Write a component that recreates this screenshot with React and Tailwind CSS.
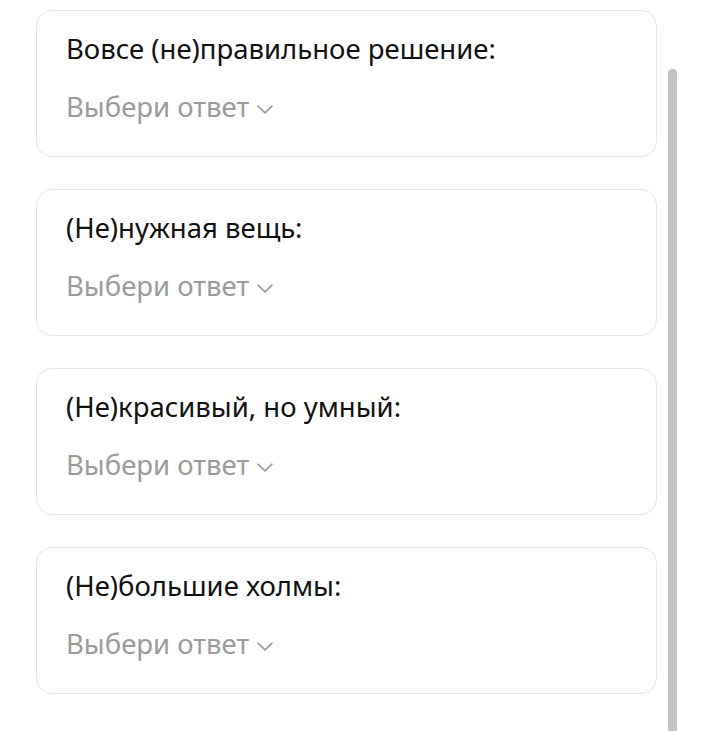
import React from "react";

const items = [
  "Вовсе (не)правильное решение:",
  "(Не)нужная вещь:",
  "(Не)красивый, но умный:",
  "(Не)большие холмы:",
];

function Chevron() {
  return (
    <svg width="16" height="9" viewBox="0 0 16 9" className="ml-[8px] mt-[4px]" fill="none">
      <path d="M1 1.2 L8 7.8 L15 1.2" stroke="#9a9a9a" strokeWidth="1.6" strokeLinecap="round" strokeLinejoin="round" />
    </svg>
  );
}

export default function App() {
  return (
    <div className="relative w-[709px] h-[731px] bg-white overflow-hidden" style={{ fontFamily: '"Noto Sans", sans-serif' }}>
      <div className="flex flex-col gap-[32px] pl-[36px] pt-[10px] w-[657px]">
        {items.map((t) => (
          <div key={t} className="h-[147px] rounded-[16px] border border-[#e6e6e6] pl-[29px] pt-[21px]">
            <div className="text-[27.5px] leading-[34px] text-[#111]">{t}</div>
            <div className="flex items-center mt-[24px] text-[27.5px] leading-[34px] text-[#9b9b9b]">
              <span>Выбери ответ</span>
              <Chevron />
            </div>
          </div>
        ))}
      </div>
      <div className="absolute left-[668px] top-[69px] w-[9px] h-[680px] rounded-t-full bg-[#c2c2c2]" />
    </div>
  );
}
